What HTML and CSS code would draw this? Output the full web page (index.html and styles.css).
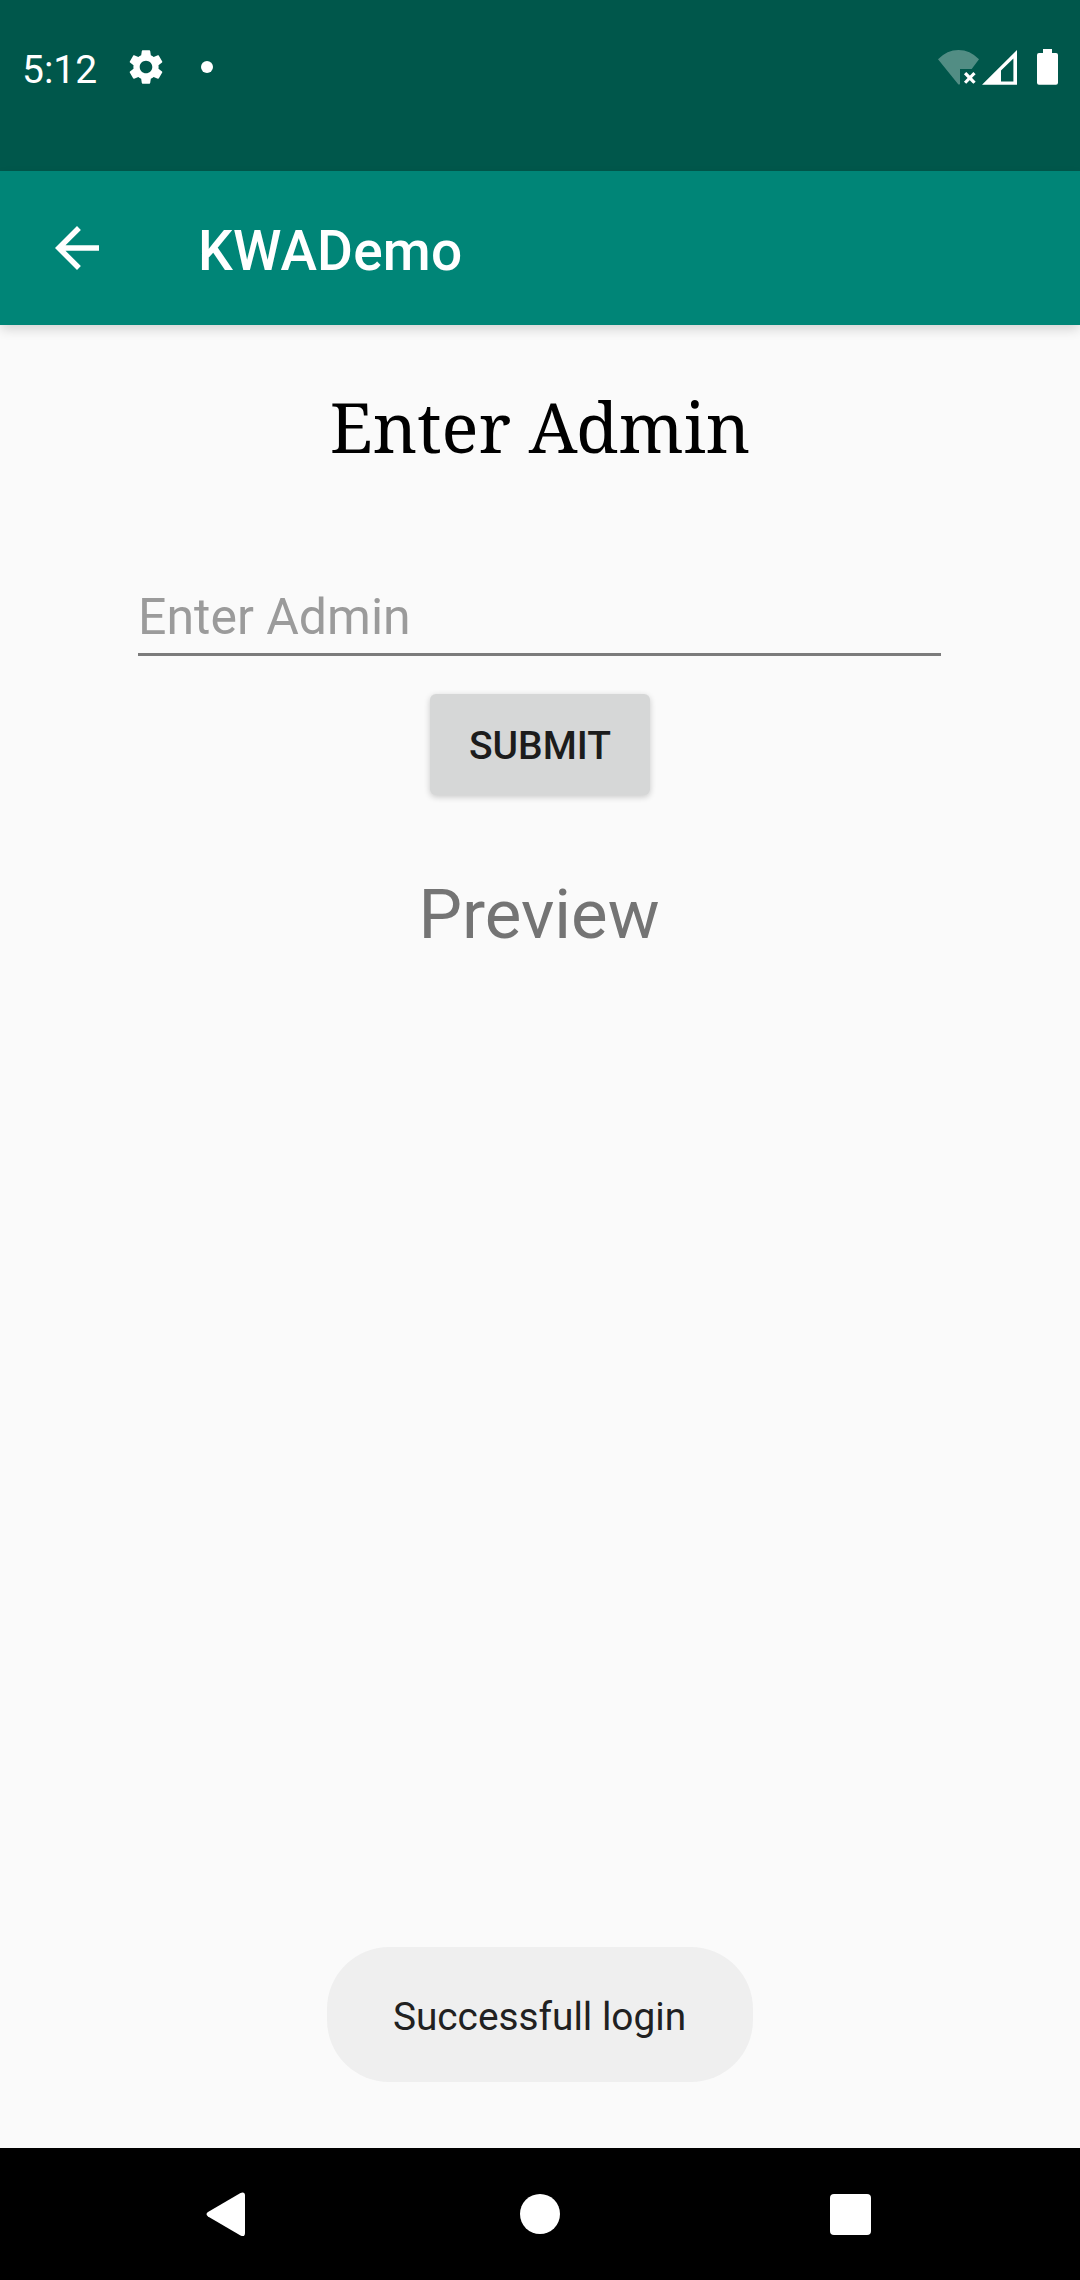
FILE: index.html
```html
<!DOCTYPE html>
<html lang="en">
<head>
<meta charset="utf-8">
<title>KWADemo</title>
<link rel="stylesheet" href="styles.css">
</head>
<body>
<div class="screen">
  <div class="status-bar">
    <span class="clock">5:12</span>
    <svg class="gear" viewBox="0 0 24 24" fill="#fff"><path d="M19.14,12.94c0.04-0.3,0.06-0.61,0.06-0.94c0-0.32-0.02-0.64-0.07-0.94l2.03-1.58c0.18-0.14,0.23-0.41,0.12-0.61l-1.92-3.32c-0.12-0.22-0.37-0.29-0.59-0.22l-2.39,0.96c-0.5-0.38-1.03-0.7-1.62-0.94L14.4,2.81c-0.04-0.24-0.24-0.41-0.48-0.41h-3.84c-0.24,0-0.43,0.17-0.47,0.41L9.25,5.35C8.66,5.59,8.12,5.92,7.63,6.29L5.24,5.33c-0.22-0.08-0.47,0-0.59,0.22L2.74,8.87C2.62,9.08,2.66,9.34,2.86,9.48l2.03,1.58C4.84,11.36,4.8,11.69,4.8,12s0.02,0.64,0.07,0.94l-2.03,1.58c-0.18,0.14-0.23,0.41-0.12,0.61l1.92,3.32c0.12,0.22,0.37,0.29,0.59,0.22l2.39-0.96c0.5,0.38,1.03,0.7,1.62,0.94l0.36,2.54c0.05,0.24,0.24,0.41,0.48,0.41h3.84c0.24,0,0.44-0.17,0.47-0.41l0.36-2.54c0.59-0.24,1.13-0.56,1.62-0.94l2.39,0.96c0.22,0.08,0.47,0,0.59-0.22l1.92-3.32c0.12-0.22,0.07-0.47-0.12-0.61L19.14,12.94z M12,15.6c-1.98,0-3.6-1.62-3.6-3.6s1.62-3.6,3.6-3.6s3.6,1.62,3.6,3.6S13.98,15.6,12,15.6z"/></svg>
    <span class="dot"></span>
    <svg class="system-icons" width="124" height="40" viewBox="0 0 124 40" fill="#fff">
      <path fill-opacity=".32" d="M2 12.3Q11 3 22.5 3T43 12.3L35.7 22H24V37Q23 38 22 37Z"/>
      <path d="M30.2 27.2l7.2 7.4m0-7.4l-7.2 7.4" fill="none" stroke="#fff" stroke-width="3.2" stroke-linecap="square"/>
      <path fill-rule="evenodd" d="M46 37.8L81 3V37.8ZM65 23.4V34.4H77.4V11.6Z"/>
      <path d="M107 2h9v4h4q2 0 2 2V35.700q0 2-2 2h-17q-2 0-2-2V8q0-2 2-2h4z"/>
    </svg>
  </div>
  <header class="app-bar">
    <svg class="back" width="66" height="66" viewBox="0 0 24 24" fill="#fff"><path d="M20 11H7.830l5.590-5.590L12 4l-8 8 8 8 1.410-1.410L7.830 13H20v-2z"/></svg>
    <h1 class="app-title">KWADemo</h1>
  </header>
  <main class="content">
    <h2 class="heading">Enter Admin</h2>
    <input class="field" type="text" placeholder="Enter Admin">
    <button class="submit" type="button">SUBMIT</button>
    <p class="preview">Preview</p>
    <div class="toast">Successfull login</div>
  </main>
  <nav class="nav-bar">
    <svg viewBox="0 0 44 50" width="44" height="50" fill="#fff"><path d="M4 23L36.500 4Q41 2.500 41 6.500V44Q41 48.500 36.500 46.500L4 27.500Q1 25.200 4 23Z"/></svg>
    <span class="home"></span>
    <span class="recents"></span>
  </nav>
</div>
</body>
</html>
```
FILE: styles.css
```css
* { box-sizing: border-box; margin: 0; }

body { font-family: Roboto, sans-serif; background: #fafafa; }

.screen {
  display: flex;
  flex-direction: column;
  width: 1080px;
  height: 2280px;
  overflow: hidden;
}

.status-bar {
  display: flex;
  align-items: center;
  height: 171px;
  padding: 0 20px 37px 22px;
  background: #00574b;
  color: #fff;
}
.clock { width: 103px; padding-top: 5px; font-size: 39px; line-height: 46px; }
.gear { width: 42px; height: 42px; }
.dot { width: 12px; height: 12px; margin-left: 34px; border-radius: 50%; background: #fff; }
.system-icons { margin-left: auto; }

.app-bar {
  display: flex;
  align-items: center;
  height: 154px;
  padding-left: 44px;
  background: #008577;
  color: #fff;
  box-shadow: 0 5px 11px -1px rgba(0, 0, 0, .16);
  z-index: 1;
}
.app-title {
  margin-left: 88px;
  padding-top: 6px;
  font-size: 55px;
  font-weight: 500;
  line-height: 64px;
  letter-spacing: .2px;
}

.content {
  position: relative;
  display: flex;
  flex: 1;
  flex-direction: column;
  align-items: center;
}
.heading {
  margin-top: 54px;
  color: #000;
  font: 400 69px/94px "Noto Serif", "DejaVu Serif Condensed", "DejaVu Serif", serif;
  white-space: nowrap;
}
.field {
  width: 803px;
  height: 83px;
  margin: 100px 1px 0 0;
  padding: 8px 0 0;
  border: 0;
  border-bottom: 3px solid #7b7b7b;
  background: none;
  font: 400 50px/60px Roboto, sans-serif;
  outline: 0;
}
.field::placeholder { color: #9b9b9b; opacity: 1; }
.submit {
  width: 220px;
  height: 101px;
  margin-top: 38px;
  padding: 3px 0 0;
  border: 0;
  border-radius: 6px;
  background: #d6d7d7;
  box-shadow: 0 2px 6px rgba(0, 0, 0, .2);
  color: #1c1c1c;
  font: 500 39px/46px Roboto, sans-serif;
}
.preview { margin: 80px 2px 0 0; color: #747474; font-size: 69px; line-height: 80px; }
.toast {
  position: absolute;
  bottom: 66px;
  left: 327px;
  width: 426px;
  height: 135px;
  padding: 5px 1px 0 0;
  border-radius: 62px;
  background: #efefef;
  color: #212121;
  font-size: 38.800px;
  line-height: 130px;
  text-align: center;
}

.nav-bar {
  display: flex;
  align-items: center;
  height: 132px;
  padding-left: 204px;
  background: #000;
}
.home { width: 40px; height: 40px; margin-left: 272px; border-radius: 50%; background: #fff; }
.recents { width: 41px; height: 41px; margin-left: 270px; border-radius: 4px; background: #fff; }
```
